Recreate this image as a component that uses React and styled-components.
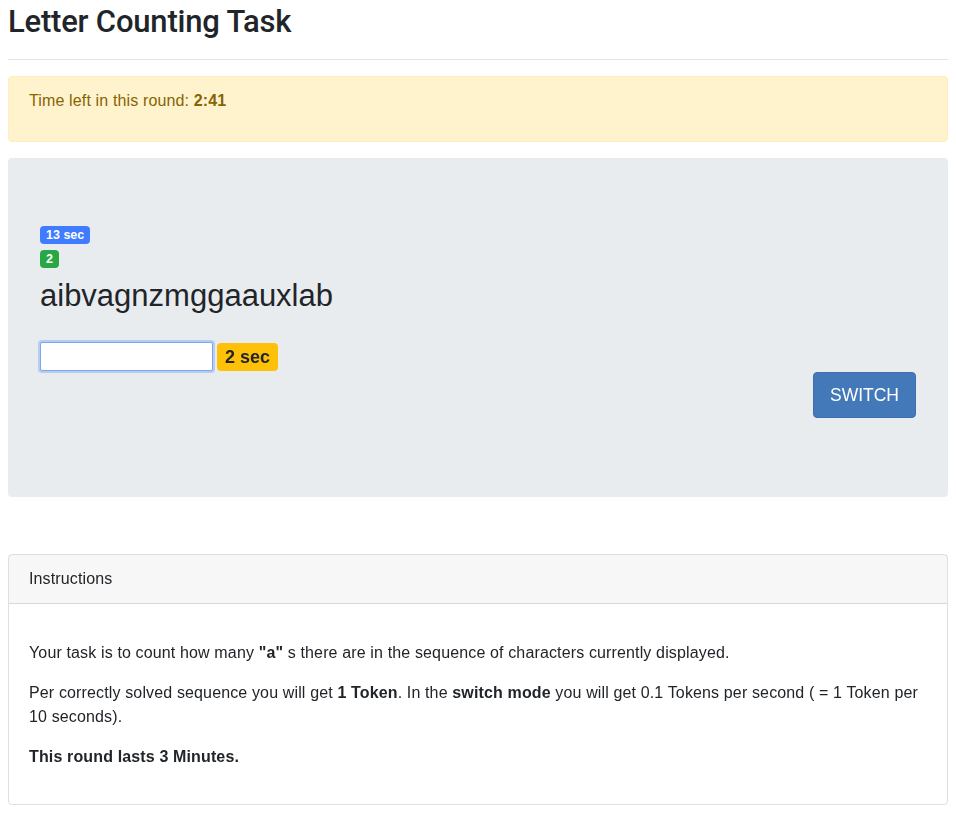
import React from 'react'
import styled, { createGlobalStyle } from 'styled-components'

const GlobalStyle = createGlobalStyle`
  body {
    margin: 0;
    font-family: "Liberation Sans", Arial, sans-serif;
    font-size: 16px;
    line-height: 1.5;
    letter-spacing: 0.14px;
    color: #212529;
    background: #fff;
  }
`

const Page = styled.div`
  padding: 0 8px 24px;
`

const Title = styled.h2`
  margin: 3px 0 0;
  font-family: Roboto, "Liberation Sans", sans-serif;
  font-size: 31px;
  font-weight: 500;
  line-height: 38px;
  letter-spacing: -0.2px;
`

const Rule = styled.hr`
  margin: 18px 0 16px;
  border: 0;
  border-top: 1px solid rgba(0, 0, 0, 0.1);
`

const Alert = styled.div`
  padding: 12px 20px 28px;
  margin-bottom: 16px;
  border: 1px solid #ffeeba;
  border-radius: 4px;
  background-color: #fff3cd;
  color: #856404;
`

const Jumbotron = styled.div`
  padding: 64px 32px 64px;
  margin-bottom: 57px;
  border-radius: 4px;
  background-color: #e9ecef;
`

const BadgeLine = styled.div`
  line-height: 24px;
  height: 24px;
`

const Badge = styled.span`
  display: inline-block;
  padding: ${p => p.$big ? '5px 8px' : '3px 6px'};
  font-size: ${p => p.$big ? '18px' : '12.5px'};
  font-weight: 700;
  line-height: 1;
  letter-spacing: 0;
  border-radius: 4px;
  vertical-align: middle;
  color: ${p => p.$dark ? '#212529' : '#fff'};
  background-color: ${p => p.$bg};
`

const Sequence = styled.div`
  margin: 8px 0 0;
  font-size: 31px;
  line-height: 36px;
  letter-spacing: 0;
`

const AnswerRow = styled.div`
  display: flex;
  align-items: center;
  gap: 4px;
  margin-top: 28px;
`

const Answer = styled.input`
  box-sizing: border-box;
  width: 173px;
  height: 29px;
  margin: 0;
  padding: 2px 4px;
  border: 1px solid #7aa7f0;
  border-radius: 2px;
  box-shadow: 0 0 0 2px rgba(90, 145, 245, 0.35);
  font: inherit;
  outline: none;
  background: #fff;
`

const ButtonRow = styled.div`
  display: flex;
  justify-content: flex-end;
  margin-top: 1px;
  padding-bottom: 15px;
`

const SwitchButton = styled.button`
  padding: 8px 16px;
  border: 1px solid #3d70ad;
  border-radius: 4px;
  background-color: #4378b9;
  color: #fff;
  font-family: inherit;
  font-size: 17.5px;
  line-height: 28px;
  letter-spacing: 0;
  cursor: pointer;
`

const Card = styled.div`
  border: 1px solid rgba(0, 0, 0, 0.125);
  border-radius: 4px;
`

const CardHeader = styled.div`
  padding: 12px 20px;
  background-color: rgba(0, 0, 0, 0.03);
  border-bottom: 1px solid rgba(0, 0, 0, 0.125);
`

const CardBody = styled.div`
  padding: 37px 20px 19px;
`

const Para = styled.p`
  margin: 0 0 16px;
`

export default function App() {
  return (
    <>
      <GlobalStyle />
      <Page>
        <Title>Letter Counting Task</Title>
        <Rule />
        <Alert>
          Time left in this round: <b>2:41</b>
        </Alert>
        <Jumbotron>
          <BadgeLine><Badge $bg="#3f7cff">13 sec</Badge></BadgeLine>
          <BadgeLine><Badge $bg="#28a745">2</Badge></BadgeLine>
          <Sequence>aibvagnzmggaauxlab</Sequence>
          <AnswerRow>
            <Answer type="text" autoFocus />
            <Badge $big $dark $bg="#ffc107">2 sec</Badge>
          </AnswerRow>
          <ButtonRow>
            <SwitchButton>SWITCH</SwitchButton>
          </ButtonRow>
        </Jumbotron>
        <Card>
          <CardHeader>Instructions</CardHeader>
          <CardBody>
            <Para>Your task is to count how many <b>"a"</b> s there are in the sequence of characters currently displayed.</Para>
            <Para>Per correctly solved sequence you will get <b>1 Token</b>. In the <b>switch mode</b> you will get 0.1 Tokens per second ( = 1 Token per 10 seconds).</Para>
            <Para><b>This round lasts 3 Minutes.</b></Para>
          </CardBody>
        </Card>
      </Page>
    </>
  )
}
